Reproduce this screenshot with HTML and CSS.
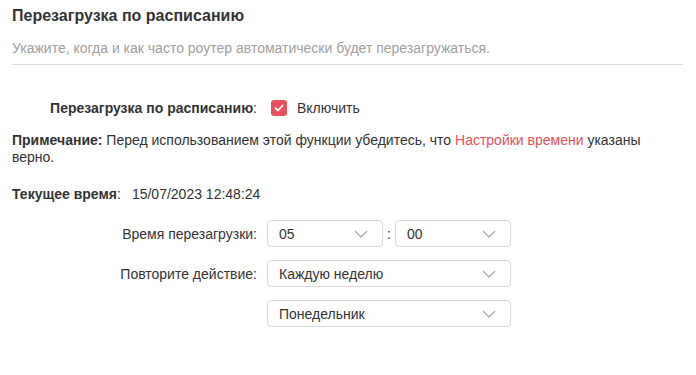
FILE: index.html
```html
<!DOCTYPE html>
<html lang="ru">
<head>
  <meta charset="UTF-8">
  <meta name="viewport" content="width=device-width, initial-scale=1.0">
  <title>Перезагрузка по расписанию</title>
  <link rel="stylesheet" href="styles.css">
</head>

<body>
  <h1>Перезагрузка по расписанию</h1>
  <p class="descr">Укажите, когда и как часто роутер автоматически будет перезагружаться.</p>
  <hr>

  <div class="row row-enable">
    <div class="label"><strong>Перезагрузка по расписанию</strong>:</div>
    <label class="check">
      <span class="box">
        <svg width="10" height="8" viewBox="0 0 10 8"><path d="M1.5 4.2 L4 6.5 L8.5 1.5" fill="none" stroke="#fff" stroke-width="1.8" stroke-linecap="round" stroke-linejoin="round"/></svg>
      </span>
      Включить
    </label>
  </div>

  <p class="note"><strong>Примечание:</strong> Перед использованием этой функции убедитесь, что <a href="#">Настройки времени</a> указаны верно.</p>

  <div class="current"><strong>Текущее время</strong>:<span class="value">15/07/2023 12:48:24</span></div>

  <div class="form">
    <div class="row">
      <div class="label">Время перезагрузки:</div>
      <div class="time">
        <div class="select small">
          <span>05</span>
          <svg class="arrow" width="14" height="8" viewBox="0 0 14 8"><path d="M1 1 L7 7 L13 1" fill="none" stroke="#b0b0b0" stroke-width="1.4"/></svg>
        </div>
        <span class="colon">:</span>
        <div class="select small">
          <span>00</span>
          <svg class="arrow" width="14" height="8" viewBox="0 0 14 8"><path d="M1 1 L7 7 L13 1" fill="none" stroke="#b0b0b0" stroke-width="1.4"/></svg>
        </div>
      </div>
    </div>

    <div class="row">
      <div class="label">Повторите действие:</div>
      <div class="select">
        <span>Каждую неделю</span>
        <svg class="arrow" width="14" height="8" viewBox="0 0 14 8"><path d="M1 1 L7 7 L13 1" fill="none" stroke="#b0b0b0" stroke-width="1.4"/></svg>
      </div>
    </div>

    <div class="row">
      <div class="label"></div>
      <div class="select">
        <span>Понедельник</span>
        <svg class="arrow" width="14" height="8" viewBox="0 0 14 8"><path d="M1 1 L7 7 L13 1" fill="none" stroke="#b0b0b0" stroke-width="1.4"/></svg>
      </div>
    </div>
  </div>
</body>

</html>
```

FILE: styles.css
```css
body {
  font-family: "Liberation Sans", Arial, sans-serif;
  font-size: 14px;
  margin: 0;
  padding: 6px 13px 0 12px;
  background-color: #fff;
  color: #333;
}
h1 {
  font-size: 16px;
  line-height: 20px;
  margin: 0;
  color: #333;
}
.descr {
  color: #a0a0a0;
  line-height: 18px;
  margin: 13px 0 0;
}
hr {
  border: none;
  border-top: 1px solid #dcdcdc;
  margin: 7px 0 0;
}
.row {
  display: grid;
  grid-template-columns: 245px 244px;
  column-gap: 10px;
  align-items: center;
}
.label {
  text-align: right;
}
.row-enable {
  margin-top: 33px;
  height: 20px;
}
.check {
  display: flex;
  align-items: center;
  gap: 10px;
  margin-left: 4px;
}
.box {
  width: 16px;
  height: 16px;
  border-radius: 3px;
  background-color: #e8505b;
  display: flex;
  align-items: center;
  justify-content: center;
}
.note {
  line-height: 17px;
  margin: 14px 0 0;
  max-width: 640px;
}
.note a {
  color: #e8505b;
  text-decoration: none;
}
.current {
  line-height: 17px;
  margin-top: 20px;
}
.current .value {
  margin-left: 11px;
}
.form {
  margin-top: 17px;
  display: flex;
  flex-direction: column;
  gap: 13px;
}
.time {
  display: flex;
  align-items: center;
}
.colon {
  width: 12px;
  text-align: center;
}
.select {
  height: 27px;
  box-sizing: border-box;
  border: 1px solid #d9d9d9;
  border-radius: 4px;
  padding: 0 14px 0 11px;
  display: flex;
  align-items: center;
  justify-content: space-between;
}
.select.small {
  width: 116px;
}
```
